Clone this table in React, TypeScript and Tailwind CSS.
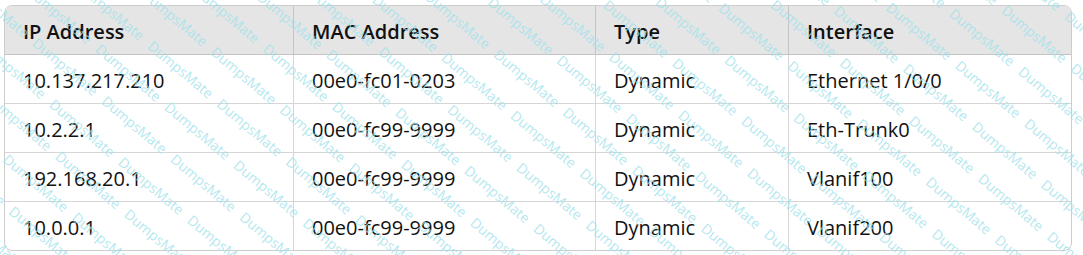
import React from 'react';

type Row = { ip: string; mac: string; type: string; iface: string };

const rows: Row[] = [
  { ip: '10.137.217.210', mac: '00e0-fc01-0203', type: 'Dynamic', iface: 'Ethernet 1/0/0' },
  { ip: '10.2.2.1', mac: '00e0-fc99-9999', type: 'Dynamic', iface: 'Eth-Trunk0' },
  { ip: '192.168.20.1', mac: '00e0-fc99-9999', type: 'Dynamic', iface: 'Vlanif100' },
  { ip: '10.0.0.1', mac: '00e0-fc99-9999', type: 'Dynamic', iface: 'Vlanif200' },
];

// faint diagonal "DumpsMate" watermark over the table
const Watermark: React.FC = () => {
  const lines = Array.from({ length: 44 });
  const words = Array.from({ length: 26 });
  return (
    <div aria-hidden className="pointer-events-none absolute inset-0 overflow-hidden">
      <div className="absolute left-[-700px] top-[-620px] w-[2400px] origin-center rotate-[40deg]">
        {lines.map((_, i) => (
          <div
            key={i}
            className={`flex h-[36px] items-center gap-[10px] whitespace-nowrap ${i % 2 ? 'pl-[38px]' : 'pl-0'}`}
          >
            {words.map((_, j) => (
              <span key={j} className="text-[14px] text-[#9fe2eb]/80">
                DumpsMate
              </span>
            ))}
          </div>
        ))}
      </div>
    </div>
  );
};

const App: React.FC = () => {
  const cell = 'px-[18px] pt-[4px] pb-0 text-left align-middle';
  return (
    <div
      className="relative h-[255px] w-[1083px] overflow-hidden bg-white pl-[4px] pt-[5px] text-[20px] text-[#111]"
      style={{ fontFamily: '"Open Sans", "Noto Sans", sans-serif' }}
    >
      <div className="w-[1068px] overflow-hidden rounded-[8px] border border-[#cdcdcd]">
        <table className="w-[1066px] table-fixed border-separate border-spacing-0">
          <colgroup>
            <col className="w-[288px]" />
            <col className="w-[302px]" />
            <col className="w-[193px]" />
            <col className="w-[283px]" />
          </colgroup>
          <thead>
            <tr className="bg-[#e5e5e5]">
              <th className={`${cell} h-[49px] border-b border-[#c4c4c4] font-semibold`}>IP Address</th>
              <th className={`${cell} h-[49px] border-b border-l border-[#c4c4c4] font-semibold`}>MAC Address</th>
              <th className={`${cell} h-[49px] border-b border-l border-[#c4c4c4] font-semibold`}>Type</th>
              <th className={`${cell} h-[49px] border-b border-l border-[#c4c4c4] font-semibold`}>Interface</th>
            </tr>
          </thead>
          <tbody>
            {rows.map((r, i) => {
              const last = i === rows.length - 1;
              const b = last ? 'h-[48px]' : 'h-[49px] border-b';
              return (
                <tr key={i}>
                  <td className={`${cell} ${b} border-[#d6d6d6]`}>{r.ip}</td>
                  <td className={`${cell} ${b} border-l border-[#d6d6d6]`}>{r.mac}</td>
                  <td className={`${cell} ${b} border-l border-[#d6d6d6]`}>{r.type}</td>
                  <td className={`${cell} ${b} border-l border-[#d6d6d6]`}>{r.iface}</td>
                </tr>
              );
            })}
          </tbody>
        </table>
      </div>
      <Watermark />
    </div>
  );
};

export default App;
